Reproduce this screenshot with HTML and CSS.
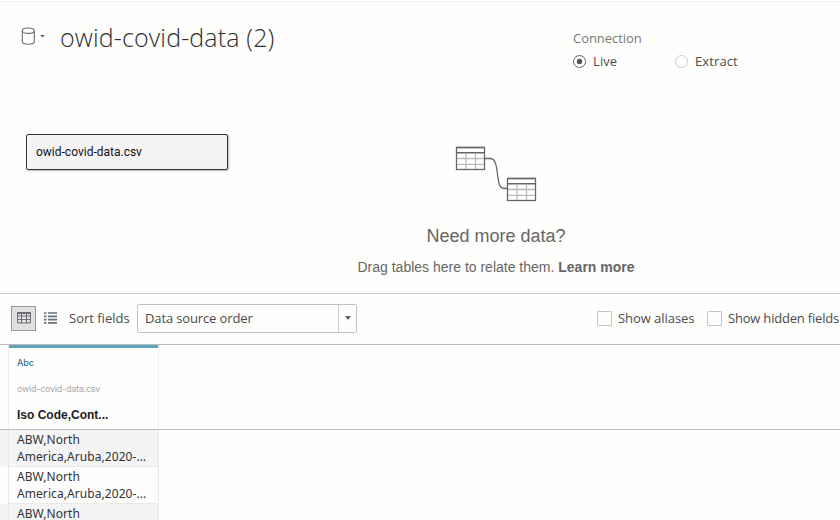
FILE: index.html
```html
<!DOCTYPE html>
<html lang="en">
<head>
<meta charset="utf-8">
<title>owid-covid-data (2)</title>
<link rel="stylesheet" href="styles.css">
</head>
<body>
<div class="app">
  <header class="header">
    <div class="source">
      <svg class="source-icon" width="26" height="20" viewBox="0 0 26 20">
        <g fill="none" stroke="#6c6c6c" stroke-width="1.1">
          <ellipse cx="7.3" cy="3.7" rx="6" ry="2.7"/>
          <path d="M1.3 3.7V14.500c0 1.5 2.6 2.7 6 2.7s6-1.2 6-2.7V3.7"/>
        </g>
        <path d="M19 8h5l-2.5 2.6z" fill="#666"/>
      </svg>
      <h1 class="title">owid-covid-data (2)</h1>
    </div>
    <div class="connection">
      <div class="connection-label">Connection</div>
      <div class="radios">
        <div class="radio live"><span class="dot on"></span><span>Live</span></div>
        <div class="radio"><span class="dot"></span><span>Extract</span></div>
      </div>
    </div>
  </header>
  <main class="canvas">
    <div class="table-node"><span>owid-covid-data.csv</span></div>
    <div class="hint">
      <svg class="hint-icon" width="82" height="56" viewBox="0 0 82 56">
        <path d="M30 12.500h5c11 0 4 30 14 30h3" fill="none" stroke="#666" stroke-width="1.3"/>
        <g id="t">
          <rect x="1.5" y="1.5" width="28" height="22" fill="#fff" stroke="#666" stroke-width="1.3"/>
          <path d="M2 12.500h27M2 18.300h27M11 8v15M20.500 8v15" stroke="#bbb" stroke-width="1.300"/>
          <path d="M1 1.500h29M1 6.800h29" stroke="#666" stroke-width="1.600"/>
        </g>
        <use href="#t" x="51" y="31"/>
      </svg>
      <div class="hint-title">Need more data?</div>
      <div class="hint-text"><span>Drag tables here to relate them.</span> <b>Learn more</b></div>
    </div>
  </main>
  <div class="toolbar">
    <div class="view-btn">
      <svg width="14" height="12" viewBox="0 0 14 12">
        <path d="M.5.5h13v10.500H.5zM.5 4h13M.5 7.500h13M4.500 1v10M9.500 1v10" fill="none" stroke="#6b6f75"/>
        <path d="M0 1h14" stroke="#6b6f75" stroke-width="2"/>
      </svg>
    </div>
    <svg class="list-icon" width="13" height="12" viewBox="0 0 13 12">
      <path d="M0 1h2.500M0 4.300h2.500M0 7.600h2.500M0 10.900h2.500M4 1h9M4 4.300h9M4 7.600h9M4 10.900h9" stroke="#667080" stroke-width="1.700"/>
    </svg>
    <span class="sort-label">Sort fields</span>
    <div class="select"><span class="select-text">Data source order</span><span class="select-arrow"></span></div>
    <div class="checks">
      <span class="box"></span><span class="t-aliases">Show aliases</span>
      <span class="box"></span><span class="t-hidden">Show hidden fields</span>
    </div>
  </div>
  <section class="grid">
    <div class="grid-head">
      <div class="col-head">
        <div class="type">Abc</div>
        <div class="file">owid-covid-data.csv</div>
        <div class="field">Iso Code,Cont...</div>
      </div>
    </div>
    <div class="row odd"><div class="cell">ABW,North<br>America,Aruba,2020-...</div></div>
    <div class="row"><div class="cell">ABW,North<br>America,Aruba,2020-...</div></div>
    <div class="row odd"><div class="cell">ABW,North</div></div>
  </section>
</div>
</body>
</html>
```
FILE: styles.css
```css
* { box-sizing: border-box; }
body { margin: 0; background: #fefefd; color: #4b4b4b; font: 13px/18px "Open Sans", sans-serif; }
.app { width: 840px; height: 520px; overflow: hidden; }
.header { display: flex; height: 120px; border-top: 1px solid #fefefd; box-shadow: inset 0 1px #eee; }
.source { display: flex; width: 573px; padding: 18px 0 0 21px; }
.source-icon { margin-top: 8px; }
.title { margin: 0 0 0 13px; font-size: 25px; line-height: 36px; font-weight: 300; color: #303030; white-space: nowrap; letter-spacing: .13px; }
.connection { padding-top: 28px; }
.connection-label { color: #777; line-height: 19px; letter-spacing: -.05px; }
.radios { display: flex; margin-top: 4px; }
.radio { display: flex; align-items: center; gap: 7px; letter-spacing: .1px; }
.live { width: 102px; }
.dot { width: 13px; height: 13px; border: 1px solid #ccc; border-radius: 50%; }
.dot.on { border-color: #666; background: radial-gradient(circle, #555 2.4px, transparent 3.1px); }
.canvas { display: flex; height: 174px; border-bottom: 1px solid #ccc; }
.table-node { width: 202px; height: 36px; margin: 14px 0 0 26px; padding: 0 9px; border: 1px solid #30323a; border-radius: 2px; background: #f4f4f4; box-shadow: 1px 1px 2px #bbb; font: 12px/34px Roboto, sans-serif; color: #111; }
.hint { width: 300px; margin-left: 118px; text-align: center; font-family: "Liberation Sans", sans-serif; color: #666; white-space: nowrap; }
.hint-icon { display: block; margin: 26px auto 0; }
.hint-title { margin-top: 22px; font-size: 18px; line-height: 24px; }
.hint-text { margin-top: 10px; font-size: 14px; line-height: 18px; }
.toolbar { display: flex; align-items: center; height: 51px; padding: 0 0 2px 11px; border-bottom: 1px solid #bcbcc0; white-space: nowrap; }
.toolbar > * { flex-shrink: 0; }
.view-btn { display: flex; align-items: center; justify-content: center; width: 25px; height: 25px; border: 1px solid #999; background: #e0e0e0; }
.list-icon { margin-left: 8px; }
.sort-label { width: 61px; margin: 0 7px 0 12px; }
.select { display: flex; width: 220px; height: 29px; border: 1px solid #c2c2c4; border-radius: 2px; line-height: 27px; }
.select-text { flex: 1; padding-left: 7px; letter-spacing: -.13px; }
.select-arrow { display: flex; align-items: center; justify-content: center; width: 18px; border-left: 1px solid #ccc; }
.select-arrow::before { content: ""; border: 3.5px solid transparent; border-top: 4px solid #666; border-bottom: 0; }
.checks { display: flex; align-items: center; margin-left: 240px; }
.box { width: 15px; height: 15px; margin-right: 6px; border: 1px solid #c4c4c8; border-radius: 1px; }
.t-aliases { width: 77px; margin-right: 12px; letter-spacing: -.05px; }
.t-hidden { width: 112px; letter-spacing: -.2px; }
.grid-head { height: 85px; padding-left: 8px; border-bottom: 1px solid #bcbcbc; }
.col-head { width: 151px; height: 84px; padding-left: 8px; border: solid #eee; border-width: 0 1px; background: linear-gradient(#5fa3bf 3px, transparent 3px); }
.type { padding-top: 9px; font: 500 9px/18px Inter, sans-serif; color: #38708c; height: 31px; letter-spacing: -.1px; }
.file { padding-top: 4px; font: 9px/18px Inter, sans-serif; color: #aaa; height: 26px; letter-spacing: -.25px; }
.field { font: bold 12px/26px "Liberation Sans", sans-serif; color: #222; }
.row { width: 159px; height: 37px; padding-left: 8px; }
.odd { background: #f4f4f4; }
.cell { height: 37px; padding: 1px 0 0 8px; border: solid #e9e9e9; border-width: 0 1px 1px; font: 12px/17px "Noto Sans", sans-serif; letter-spacing: .07px; color: #333; white-space: nowrap; }
```
